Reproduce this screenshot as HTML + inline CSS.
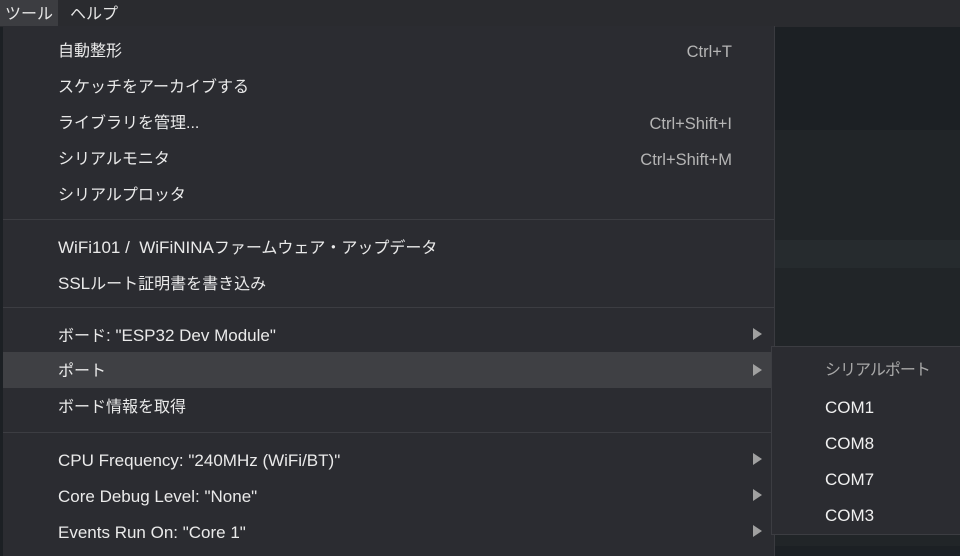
<html><head><style>
body{margin:0;width:960px;height:546px;overflow:hidden;background:#1c2024;font-family:"Liberation Sans","Noto Sans CJK JP",sans-serif;position:relative}
.bar{position:absolute;left:0;top:0;width:960px;height:27px;background:#2a2b2f}
.bar span{position:absolute;top:0;height:26px;line-height:29px;color:#e6e6e6;font-size:16px}
.bg{position:absolute;left:775px;width:185px}
.menu{position:absolute;left:3px;top:26px;width:771px;height:530px;background:#2b2c31;border-right:1px solid #3a3b40}
.it{position:absolute;left:55px;height:36px;line-height:40px;font-size:17px;color:#eaeaea;width:680px}
.sc{position:absolute;right:6px;top:0;color:#b5b5b5;font-size:16.5px}
.sep{position:absolute;left:0;width:771px;height:1px;background:#3c3d42}
.ar{position:absolute;left:750px;width:0;height:0;border-left:9px solid #a0a0a0;border-top:6px solid transparent;border-bottom:6px solid transparent}
.sub{position:absolute;left:771px;top:346px;width:189px;height:187px;background:#2b2c31;border:1px solid #3c3d42;border-right:none}
.si{position:absolute;left:53px;font-size:17px;color:#f0f0f0;line-height:38px;height:36px}
.j{font-size:16px}
</style></head><body>
<div class="bar"><span style="left:0;width:58px;background:#3c3d41;text-align:center">ツール</span><span style="left:70px">ヘルプ</span></div>
<div class="bg" style="top:130px;height:110px;background:#212528"></div>
<div class="bg" style="top:240px;height:28px;background:#262b2e"></div>
<div class="bg" style="top:268px;height:278px;background:#212528"></div>
<div style="position:absolute;left:0;top:27px;width:3px;height:519px;background:#1c2024"></div>
<div class="menu">
<div class="it j" style="top:6px">自動整形<span class="sc">Ctrl+T</span></div>
<div class="it j" style="top:42px">スケッチをアーカイブする</div>
<div class="it j" style="top:78px">ライブラリを管理...<span class="sc">Ctrl+Shift+I</span></div>
<div class="it j" style="top:114px">シリアルモニタ<span class="sc">Ctrl+Shift+M</span></div>
<div class="it j" style="top:150px">シリアルプロッタ</div>
<div class="sep" style="top:193px"></div>
<div class="it" style="top:202px">WiFi101 / &nbsp;WiFiNINA<span class="j">ファームウェア・アップデータ</span></div>
<div class="it" style="top:238px">SSL<span class="j">ルート証明書を書き込み</span></div>
<div class="sep" style="top:281px"></div>
<div class="it" style="top:290px"><span class="j">ボード</span>: "ESP32 Dev Module"</div>
<div class="ar" style="top:302px"></div>
<div style="position:absolute;left:0;top:326px;width:771px;height:36px;background:#3f4044"></div>
<div class="it j" style="top:326px">ポート</div>
<div class="ar" style="top:338px"></div>
<div class="it j" style="top:362px">ボード情報を取得</div>
<div class="sep" style="top:406px"></div>
<div class="it" style="top:415px">CPU Frequency: "240MHz (WiFi/BT)"</div>
<div class="ar" style="top:427px"></div>
<div class="it" style="top:451px">Core Debug Level: "None"</div>
<div class="ar" style="top:463px"></div>
<div class="it" style="top:487px">Events Run On: "Core 1"</div>
<div class="ar" style="top:499px"></div>
</div>
<div class="sub">
<div class="si" style="top:5px;color:#a8a8a8;font-size:16px;letter-spacing:-1px">シリアルポート</div>
<div class="si" style="top:42px">COM1</div>
<div class="si" style="top:78px">COM8</div>
<div class="si" style="top:114px">COM7</div>
<div class="si" style="top:150px">COM3</div>
</div>
</body></html>
